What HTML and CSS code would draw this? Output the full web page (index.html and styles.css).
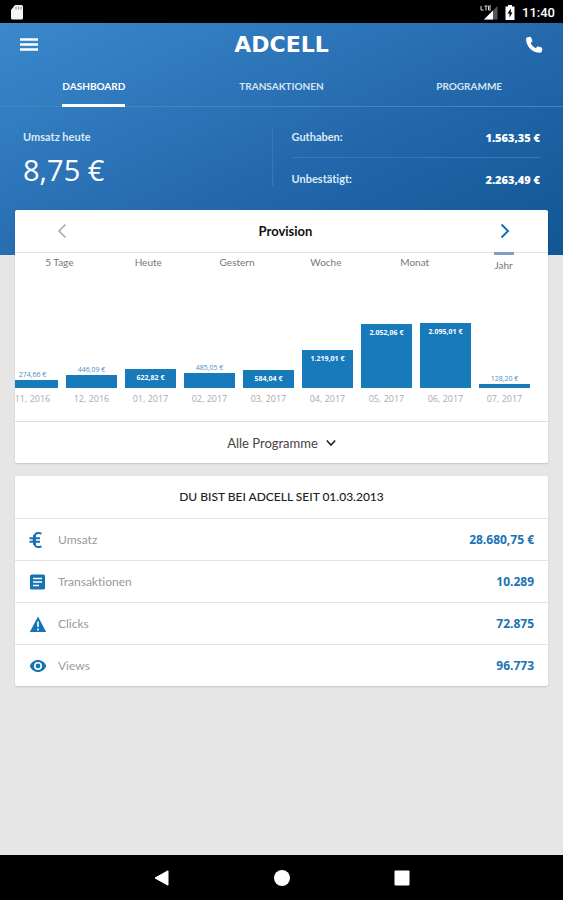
FILE: index.html
```html
<!DOCTYPE html>
<html lang="de">
<head>
    <meta charset="UTF-8">
    <meta name="viewport" content="width=device-width, initial-scale=1">
    <title>ADCELL - Dashboard</title>
    <link rel="stylesheet" href="styles.css">
</head>
<body>
    <div class="status-bar">
        <svg class="sd-card" width="12" height="15" viewBox="0 0 12 15"><path d="M4 0h6.500a1.500 1.500 0 0 1 1.500 1.500v11.500a1.500 1.500 0 0 1-1.500 1.500h-9a1.500 1.500 0 0 1-1.500-1.500V5z" fill="#f5f5f5"/><path d="M5 1.500v3M7.500 1.500v3M10 1.500v3" stroke="#999" stroke-width="1.200"/></svg>
        <svg width="18" height="15" viewBox="0 0 18 15"><path d="M1 1v4h2.500M4.500 1h3M6 1v4.500M11 1H8.500v4H11M8.500 3H11" fill="none" stroke="#ddd"/><path d="M17.500 1v13.500H4z" fill="#555"/><path d="M13 5.500v9H4z" fill="#fff"/></svg>
        <svg width="10" height="15" viewBox="0 0 10 15"><path d="M3 0h4v1.500h2.500V15h-9V1.500H3z" fill="#fff"/><path d="M5.800 3.500 2.500 8.500h2v4l3-5h-1.700z" fill="#000"/></svg>
        <span class="clock">11:40</span>
    </div>

    <header class="header">
        <div class="app-bar">
            <button class="icon-button" aria-label="Menü">
                <svg width="18" height="14" viewBox="0 0 18 14"><path d="M0 1.500h18M0 6.500h18M0 11.500h18" stroke="#fff" stroke-width="2.400"/></svg>
            </button>
            <div class="logo">ADCELL</div>
            <button class="icon-button" aria-label="Anrufen">
                <svg width="18" height="18" viewBox="0 0 18 18"><path d="M2.500 1.200 5 .8q.8 0 1.100.7l1.200 3q.2.700-.3 1.200L5.600 7.200q1.700 3.300 5.100 5.100l1.400-1.600q.5-.5 1.200-.3l3.200 1q.8.300.8 1.100l-.3 2.600q-.3 1.700-2 1.700C7.400 16.800 1.200 10.600 1 3q0-1.500 1.500-1.800z" fill="#fff"/></svg>
            </button>
        </div>
        <nav class="tabs">
            <a href="#dashboard" class="tab active"><span>DASHBOARD</span></a>
            <a href="#transaktionen" class="tab"><span>TRANSAKTIONEN</span></a>
            <a href="#programme" class="tab"><span>PROGRAMME</span></a>
        </nav>
        <div class="summary">
            <div class="today">
                <div class="label">Umsatz heute</div>
                <div class="today-amount">8,75 €</div>
            </div>
            <div class="balances">
                <div class="balance"><span class="label">Guthaben:</span><strong>1.563,35 €</strong></div>
                <div class="balance"><span class="label">Unbestätigt:</span><strong>2.263,49 €</strong></div>
            </div>
        </div>
    </header>

    <main class="content">
        <section class="card">
            <div class="card-head">
                <button class="arrow prev" aria-label="Zurück">
                    <svg width="10" height="16" viewBox="0 0 10 16"><path d="M8.500 1.500 2 8l6.500 6.500" fill="none" stroke="currentColor" stroke-width="1.600"/></svg>
                </button>
                <h2>Provision</h2>
                <button class="arrow next" aria-label="Weiter">
                    <svg width="10" height="16" viewBox="0 0 10 16"><path d="M1.500 1.500 8 8l-6.500 6.500" fill="none" stroke="currentColor" stroke-width="2"/></svg>
                </button>
            </div>
            <div class="periods">
                <button>5 Tage</button>
                <button>Heute</button>
                <button>Gestern</button>
                <button>Woche</button>
                <button>Monat</button>
                <button class="active">Jahr</button>
            </div>
            <ol class="chart">
                <li><span class="value">274,66 €</span><div class="bar" style="height: 8px"></div><span class="month">11, 2016</span></li>
                <li><span class="value">446,09 €</span><div class="bar" style="height: 13px"></div><span class="month">12, 2016</span></li>
                <li><div class="bar" style="height: 19px"><span class="value">622,82 €</span></div><span class="month">01, 2017</span></li>
                <li><span class="value">485,05 €</span><div class="bar" style="height: 15px"></div><span class="month">02, 2017</span></li>
                <li><div class="bar" style="height: 18px"><span class="value">584,04 €</span></div><span class="month">03, 2017</span></li>
                <li><div class="bar" style="height: 38px"><span class="value">1.219,01 €</span></div><span class="month">04, 2017</span></li>
                <li><div class="bar" style="height: 64px"><span class="value">2.052,06 €</span></div><span class="month">05, 2017</span></li>
                <li><div class="bar" style="height: 65px"><span class="value">2.095,01 €</span></div><span class="month">06, 2017</span></li>
                <li><span class="value">128,20 €</span><div class="bar" style="height: 4px"></div><span class="month">07, 2017</span></li>
            </ol>
            <button class="filter">
                Alle Programme
                <svg width="10" height="8" viewBox="0 0 10 8"><path d="M.8 1.500 5 6l4.200-4.500" fill="none" stroke="#222" stroke-width="1.600"/></svg>
            </button>
        </section>

        <section class="card">
            <h2 class="stats-title">DU BIST BEI ADCELL SEIT 01.03.2013</h2>
            <dl class="stats">
                <div class="stat">
                    <svg width="18" height="18" viewBox="0 0 18 18"><path d="M12.500 2.700C7 .2 4.700 4 4.700 9s2.300 8.800 7.800 6.300M.5 7.300H11M.5 10.700H11" fill="none" stroke="#1b6fb5" stroke-width="2"/><path d="M5.500 4v10" stroke="#1b6fb5" stroke-width="2.800"/></svg>
                    <dt>Umsatz</dt>
                    <dd>28.680,75 €</dd>
                </div>
                <div class="stat">
                    <svg width="18" height="18" viewBox="0 0 18 18"><rect x="1" y="1.500" width="15" height="15" rx="1.500" fill="#1474b4"/><path d="M4 5.500h9M4 9h9M4 12.500h6" stroke="#fff" stroke-width="1.600"/></svg>
                    <dt>Transaktionen</dt>
                    <dd>10.289</dd>
                </div>
                <div class="stat">
                    <svg width="18" height="18" viewBox="0 0 18 18"><path d="M9 1.500 17.200 17H.8z" fill="#1474b4"/><path d="M9 6.500v5.500M9 13.500v2" stroke="#fff" stroke-width="1.600"/></svg>
                    <dt>Clicks</dt>
                    <dd>72.875</dd>
                </div>
                <div class="stat">
                    <svg width="18" height="18" viewBox="0 0 18 18"><path d="M9 3C5.200 3 2 5.400.8 9 2 12.600 5.200 15 9 15s7-2.400 8.200-6C16 5.400 12.800 3 9 3z" fill="#1474b4"/><circle cx="9" cy="9" r="3.200" fill="none" stroke="#fff" stroke-width="1.600"/></svg>
                    <dt>Views</dt>
                    <dd>96.773</dd>
                </div>
            </dl>
        </section>
    </main>

    <div class="nav-bar">
        <button aria-label="Zurück"><svg width="16" height="16" viewBox="0 0 16 16"><path d="M14 .8v14.400L1 8z" fill="#fff" stroke="#fff" stroke-linejoin="round"/></svg></button>
        <button aria-label="Startseite"><svg width="16" height="16" viewBox="0 0 16 16"><circle cx="8" cy="8" r="8" fill="#fff"/></svg></button>
        <button aria-label="Übersicht"><svg width="16" height="16" viewBox="0 0 16 16"><rect x=".5" y=".5" width="15" height="15" rx="1" fill="#fff"/></svg></button>
    </div>
</body>
</html>
```
FILE: styles.css
```css
* {
    box-sizing: border-box;
}
body {
    margin: 0;
    min-height: 100vh;
    display: flex;
    flex-direction: column;
    background: #e6e6e6;
    color: #222;
    font-family: Lato, "Open Sans", sans-serif;
    font-size: 12px;
    font-variant-ligatures: none;
}
button {
    border: none;
    padding: 0;
    background: none;
    font-family: inherit;
    color: inherit;
    cursor: pointer;
}
svg {
    display: block;
    flex: none;
}
h2, ol, dl, dd {
    margin: 0;
    padding: 0;
}

/* system bars */
.status-bar {
    display: flex;
    align-items: center;
    gap: 7px;
    height: 23px;
    padding: 1px 8px 0 11px;
    background: #000;
    color: #fff;
}
.sd-card {
    margin-right: auto;
}
.clock {
    font: 500 13px Roboto, sans-serif;
}
.nav-bar {
    display: flex;
    justify-content: center;
    gap: 104px;
    height: 45px;
    background: #000;
}

/* header */
.header {
    padding-bottom: 69px;
    background: linear-gradient(155deg, #3b88cd 0%, #2469ac 55%, #105594 100%);
    color: #fff;
}
.app-bar {
    display: flex;
    align-items: center;
    justify-content: space-between;
    height: 43px;
    padding: 0 20px;
}
.logo {
    font: bold 22px "DejaVu Sans", sans-serif;
}
.tabs {
    display: flex;
    height: 41px;
    border-bottom: 1px solid #4584bf;
}
.tab {
    flex: 1;
    display: flex;
    justify-content: center;
    color: #d5e4f3;
    font-size: 10px;
    font-weight: bold;
    line-height: 40px;
    text-decoration: none;
}
.tab.active {
    color: #fff;
}
.tab.active span {
    height: 41px;
    border-bottom: 3px solid #fff;
}
.summary {
    display: flex;
    height: 79px;
    padding: 21px 23px 0;
}
.label {
    color: #dce9f6;
    font-size: 11px;
    font-weight: bold;
    line-height: 18px;
}
.today {
    flex: 1;
    border-right: 1px solid #3a77b3;
}
.today-amount {
    font-family: "Open Sans", sans-serif;
    font-size: 29px;
    line-height: 48px;
}
.balances {
    flex: 1;
    padding-left: 19px;
}
.balance {
    display: flex;
    justify-content: space-between;
    height: 29px;
    line-height: 20px;
}
.balance strong {
    font-family: "Open Sans", sans-serif;
    font-size: 11px;
    font-weight: 800;
}
.balance + .balance {
    padding-top: 12px;
    border-top: 1px solid #3a77b3;
}

/* cards */
.content {
    flex: 1;
    display: flex;
    flex-direction: column;
    gap: 13px;
    margin-top: -45px;
    padding: 0 15px;
}
.card {
    background: #fff;
    border-radius: 2px;
    box-shadow: 0 1px 2px rgba(0,0,0,0.15);
    overflow: hidden;
}
.card-head {
    display: flex;
    align-items: center;
    justify-content: space-between;
    height: 43px;
    padding: 0 38px;
    border-bottom: 1px solid #e4e4e4;
}
.card-head h2 {
    color: #111;
    font-size: 13px;
    font-weight: bold;
}
.arrow.prev {
    padding: 4px;
    color: #aaa;
}
.arrow.next {
    color: #1c70b4;
}
.periods {
    display: flex;
    align-items: flex-start;
    margin-top: -1px;
}
.periods button {
    flex: 1;
    color: #777;
    font-size: 10px;
    line-height: 21px;
}
.periods .active::before {
    content: "";
    display: block;
    width: 20px;
    height: 3px;
    margin: 0 auto;
    background: #7f9fc9;
}
.chart {
    display: flex;
    align-items: flex-end;
    justify-content: flex-end;
    gap: 8px;
    height: 145px;
    padding: 0 18px 12px 0;
    list-style: none;
}
.chart li {
    flex: none;
    width: 51px;
    text-align: center;
}
.bar {
    background: #167abb;
}
.value {
    display: block;
    color: #4b8fc6;
    font: 7px/11px "Open Sans", sans-serif;
}
.bar .value {
    padding-top: 3px;
    color: #fff;
    font-weight: bold;
}
.month {
    display: block;
    color: #aaa;
    font: 9px/21px "Open Sans", sans-serif;
}
.filter {
    display: flex;
    align-items: center;
    justify-content: center;
    gap: 8px;
    width: 100%;
    height: 42px;
    border-top: 1px solid #ddd;
    color: #444;
    font-size: 13px;
}
.stats-title {
    color: #222;
    font-size: 12px;
    font-weight: 500;
    line-height: 42px;
    text-align: center;
}
.stat {
    display: flex;
    align-items: center;
    gap: 11px;
    height: 42px;
    padding: 0 14px;
    border-top: 1px solid #e4e4e4;
}
.stat dt {
    flex: 1;
    color: #999;
}
.stat dd {
    color: #1b73b4;
    font-family: "Open Sans", sans-serif;
    font-weight: bold;
}
```
